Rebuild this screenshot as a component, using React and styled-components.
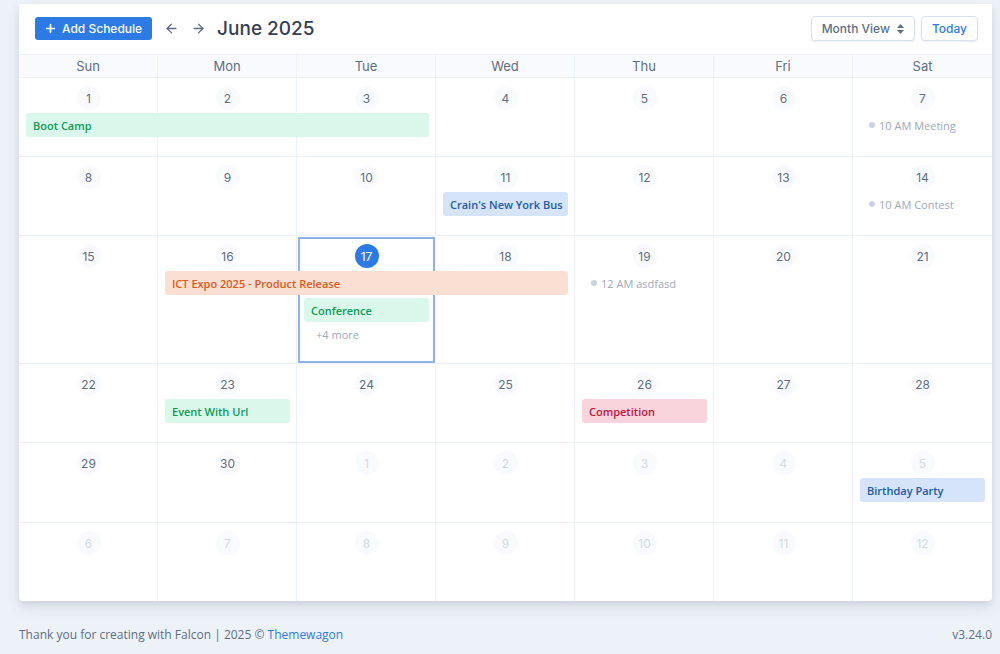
import React from 'react'
import styled, { createGlobalStyle, css } from 'styled-components'
import { Plus, ArrowLeft, ArrowRight } from 'lucide-react'

const GlobalStyle = createGlobalStyle`
  * { box-sizing: border-box; }
  body {
    margin: 0;
    background: #edf2f9;
    font-family: "Open Sans", "Noto Sans", sans-serif;
    color: #5e6e82;
  }
`

const Page = styled.div`
  padding: 4px 8px 0 19px;
  height: 654px;
  display: flex;
  flex-direction: column;
`

const Card = styled.div`
  background: #fff;
  border-radius: 0 0 4px 4px;
  box-shadow: 0 7px 14px 0 rgba(65, 69, 88, 0.1), 0 3px 6px 0 rgba(0, 0, 0, 0.07);
  overflow: hidden;
`

const Toolbar = styled.div`
  height: 50px;
  display: flex;
  align-items: center;
  justify-content: space-between;
  padding: 0 14px 1px 16px;
`

const ToolGroup = styled.div`
  display: flex;
  align-items: center;
  gap: ${p => p.$gap || 0}px;
`

const PrimaryButton = styled.button`
  display: flex;
  align-items: center;
  gap: 5px;
  height: 23px;
  padding: 0 10px 0 9px;
  border: none;
  border-radius: 3px;
  background: #2c7be5;
  color: #fff;
  font-family: Inter, "Noto Sans", sans-serif;
  font-size: 12px;
  font-weight: 500;
  white-space: nowrap;
`

const NavArrow = styled.button`
  border: none;
  background: none;
  padding: 0 6px;
  margin-left: ${p => p.$offset || 0}px;
  display: flex;
  color: #5e6e82;
`

const Title = styled.h1`
  margin: 0 0 0 5px;
  font-family: Inter, "Noto Sans", sans-serif;
  font-size: 19px;
  font-weight: 500;
  color: #344050;
`

const outlineButton = css`
  height: 25px;
  display: flex;
  align-items: center;
  border: 1px solid #d8e2ef;
  border-radius: 4px;
  background: #fff;
  box-shadow: 0 1px 2px rgba(0, 0, 0, 0.08);
  font-family: Inter, "Noto Sans", sans-serif;
  font-size: 12px;
  font-weight: 500;
  white-space: nowrap;
`

const ViewSelect = styled.div`
  ${outlineButton}
  padding: 0 10px;
  gap: 7px;
  color: #5e6e82;
`

const TodayButton = styled.button`
  ${outlineButton}
  padding: 0 10px;
  color: #2c7be5;
`

const WeekdayRow = styled.div`
  display: grid;
  grid-template-columns: repeat(7, 1fr);
  height: 24px;
  background: #f9fafd;
  border-top: 1px solid #edf2f9;
  border-bottom: 1px solid #edf2f9;
`

const Weekday = styled.div`
  display: flex;
  align-items: center;
  justify-content: center;
  font-family: Inter, "Noto Sans", sans-serif;
  font-size: 13px;
  color: #5e6e82;
  border-right: 1px solid #edf2f9;
  &:last-child { border-right: none; }
`

const Week = styled.div`
  display: grid;
  grid-template-columns: repeat(7, 1fr);
  grid-template-rows: 32px repeat(${p => p.$slots}, auto) minmax(0, 1fr);
  row-gap: 3px;
  min-height: ${p => p.$height}px;
  border-bottom: 1px solid #edf2f9;
  &:last-child { border-bottom: none; }
`

const DayCell = styled.div`
  grid-row: 1 / -1;
  grid-column: ${p => p.$col + 1};
  border-right: 1px solid #edf2f9;
  ${p => p.$col === 6 && css`border-right: none;`}
  ${p => p.$today && css`
    margin: 1px 1px 0 1px;
    border: 2px solid #8fb1ec;
  `}
`

const DayHead = styled.div`
  grid-row: 1;
  grid-column: ${p => p.$col + 1};
  display: flex;
  justify-content: center;
  align-items: flex-end;
`

const DayNumber = styled.span`
  width: 24px;
  height: 24px;
  border-radius: 50%;
  display: flex;
  align-items: center;
  justify-content: center;
  font-family: Inter, "Noto Sans", sans-serif;
  font-size: 12px;
  background: ${p => (p.$today ? '#2c7be5' : '#f9fafd')};
  color: ${p => (p.$today ? '#fff' : p.$muted ? '#d2dae4' : '#5e6e82')};
`

const tones = {
  success: { bg: '#d9f8eb', fg: '#0f9a58' },
  primary: { bg: '#d5e4f9', fg: '#2359a8' },
  warning: { bg: '#fbdfd2', fg: '#db5a22' },
  danger: { bg: '#f9d4dd', fg: '#c1133e' },
}

const EventBar = styled.div`
  grid-row: ${p => p.$slot + 2};
  grid-column: ${p => p.$col + 1} / span ${p => p.$span};
  margin: 0 7px;
  height: 24px;
  display: flex;
  align-items: center;
  padding: 0 7px;
  border-radius: 3px;
  background: ${p => tones[p.$tone].bg};
  color: ${p => tones[p.$tone].fg};
  font-size: 11px;
  font-weight: 600;
  white-space: nowrap;
  overflow: hidden;
`

const DotEvent = styled.div`
  grid-row: ${p => p.$slot + 2};
  grid-column: ${p => p.$col + 1};
  height: 24px;
  display: flex;
  align-items: center;
  gap: 4px;
  padding: 0 16px;
  font-size: 11px;
  color: #9da9bb;
  white-space: nowrap;
  &::before {
    content: '';
    width: 6px;
    height: 6px;
    border-radius: 50%;
    background: #c9d3e2;
  }
`

const MoreLink = styled.div`
  grid-row: ${p => p.$slot + 2};
  grid-column: ${p => p.$col + 1};
  height: 16px;
  padding: 2px 19px 0;
  font-size: 11px;
  color: #9da9bb;
`

const Footer = styled.footer`
  display: flex;
  justify-content: space-between;
  padding-top: 25px;
  font-size: 12px;
  color: #5e6e82;
  a { color: #2c7be5; text-decoration: none; }
`

const weekdays = ['Sun', 'Mon', 'Tue', 'Wed', 'Thu', 'Fri', 'Sat']

const weeks = [
  {
    days: [1, 2, 3, 4, 5, 6, 7],
    bars: [{ col: 0, span: 3, slot: 0, tone: 'success', title: 'Boot Camp' }],
    dots: [{ col: 6, slot: 0, title: '10 AM Meeting' }],
  },
  {
    days: [8, 9, 10, 11, 12, 13, 14],
    bars: [{ col: 3, span: 1, slot: 0, tone: 'primary', title: "Crain's New York Bus" }],
    dots: [{ col: 6, slot: 0, title: '10 AM Contest' }],
  },
  {
    days: [15, 16, 17, 18, 19, 20, 21],
    today: 2,
    bars: [
      { col: 1, span: 3, slot: 0, tone: 'warning', title: 'ICT Expo 2025 - Product Release' },
      { col: 2, span: 1, slot: 1, tone: 'success', title: 'Conference' },
    ],
    dots: [{ col: 4, slot: 0, title: '12 AM asdfasd' }],
    more: { col: 2, slot: 2, count: 4 },
  },
  {
    days: [22, 23, 24, 25, 26, 27, 28],
    bars: [
      { col: 1, span: 1, slot: 0, tone: 'success', title: 'Event With Url' },
      { col: 4, span: 1, slot: 0, tone: 'danger', title: 'Competition' },
    ],
    dots: [],
  },
  {
    days: [29, 30, 1, 2, 3, 4, 5],
    mutedFrom: 2,
    bars: [{ col: 6, span: 1, slot: 0, tone: 'primary', title: 'Birthday Party' }],
    dots: [],
  },
  { days: [6, 7, 8, 9, 10, 11, 12], mutedFrom: 0, bars: [], dots: [] },
]

const heights = [79, 79, 128, 79, 80, 78]

const SortCaret = () => (
  <svg width="7" height="10" viewBox="0 0 7 10" fill="#5e6e82">
    <path d="M3.5 0 L7 4 H0 Z" />
    <path d="M3.5 10 L7 6 H0 Z" />
  </svg>
)

const WeekRow = ({ week, height }) => {
  const slots =
    Math.max(
      0,
      ...week.bars.map(b => b.slot + 1),
      ...week.dots.map(d => d.slot + 1),
      week.more ? week.more.slot + 1 : 0
    ) || 1
  const muted = i => week.mutedFrom !== undefined && i >= week.mutedFrom
  return (
    <Week $slots={slots} $height={height}>
      {week.days.map((d, i) => (
        <DayCell key={'c' + i} $col={i} $today={week.today === i} />
      ))}
      {week.days.map((d, i) => (
        <DayHead key={'h' + i} $col={i}>
          <DayNumber $today={week.today === i} $muted={muted(i)}>{d}</DayNumber>
        </DayHead>
      ))}
      {week.bars.map(b => (
        <EventBar key={b.title} $col={b.col} $span={b.span} $slot={b.slot} $tone={b.tone}>
          {b.title}
        </EventBar>
      ))}
      {week.dots.map(d => (
        <DotEvent key={d.title} $col={d.col} $slot={d.slot}>{d.title}</DotEvent>
      ))}
      {week.more && (
        <MoreLink $col={week.more.col} $slot={week.more.slot}>+{week.more.count} more</MoreLink>
      )}
    </Week>
  )
}

const App = () => {
  return (
    <Page>
      <GlobalStyle />
      <Card>
        <Toolbar>
          <ToolGroup>
            <PrimaryButton>
              <Plus size={13} strokeWidth={3.2} />
              Add Schedule
            </PrimaryButton>
            <NavArrow $offset={6}><ArrowLeft size={15} strokeWidth={2.2} /></NavArrow>
            <NavArrow><ArrowRight size={15} strokeWidth={2.2} /></NavArrow>
            <Title>June 2025</Title>
          </ToolGroup>
          <ToolGroup $gap={6}>
            <ViewSelect>
              Month View
              <SortCaret />
            </ViewSelect>
            <TodayButton>Today</TodayButton>
          </ToolGroup>
        </Toolbar>
        <WeekdayRow>
          {weekdays.map(w => <Weekday key={w}>{w}</Weekday>)}
        </WeekdayRow>
        {weeks.map((w, i) => (
          <WeekRow key={i} week={w} height={heights[i]} />
        ))}
      </Card>
      <Footer>
        <span>Thank you for creating with Falcon | 2025 © <a href="#">Themewagon</a></span>
        <span>v3.24.0</span>
      </Footer>
    </Page>
  )
}

export default App
